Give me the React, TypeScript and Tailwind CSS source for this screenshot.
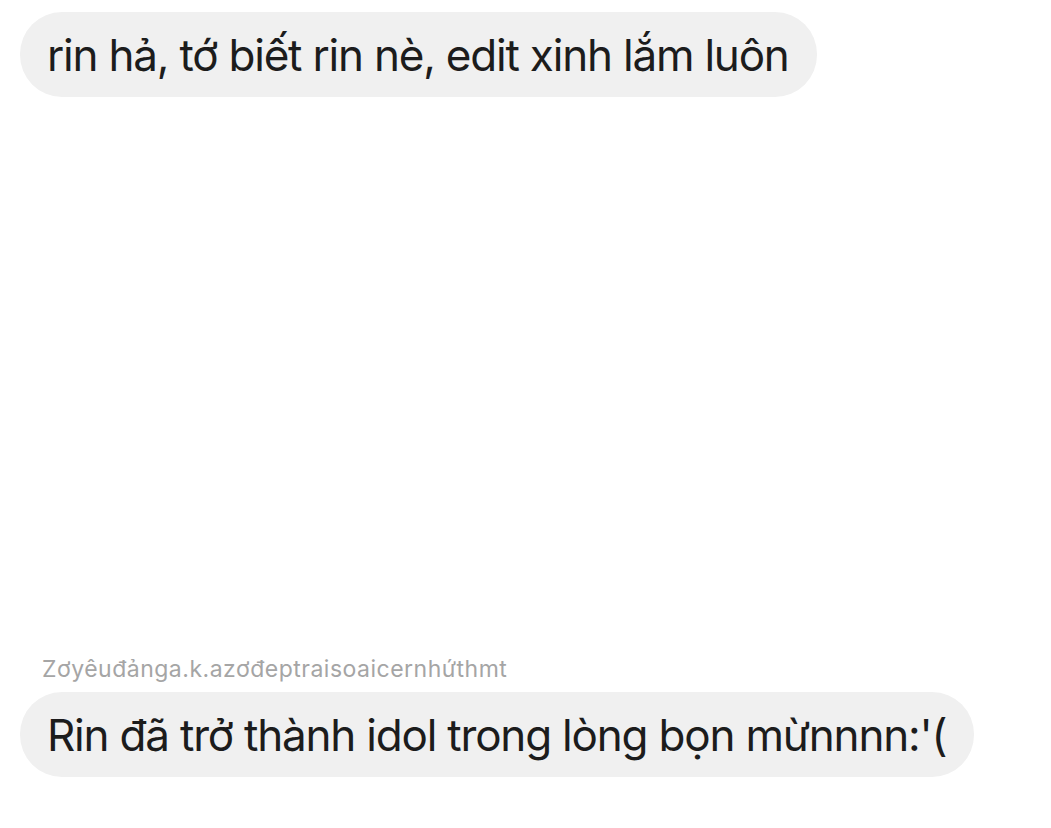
import React from 'react';

const Bubble: React.FC<{ text: string }> = ({ text }) => (
  <div className="inline-flex items-center h-[85px] pl-[27px] pr-[28px] rounded-[42px] bg-[#f0f0f0] text-[#1c1c1c] text-[44px] leading-none tracking-[-1.2px] whitespace-nowrap">
    {text}
  </div>
);

const App: React.FC = () => {
  return (
    <div className="w-[1051px] h-[828px] bg-white overflow-hidden font-[Inter,'Noto_Sans',sans-serif]">
      <div className="px-5 pt-3">
        <Bubble text="rin hả, tớ biết rin nè, edit xinh lắm luôn" />
      </div>

      <div className="px-5 pt-[561px]">
        <div className="pl-[22px] text-[23px] leading-none tracking-[0.5px] text-[#a5a5a5] mb-[11px]">
          Zơyêuđảnga.k.azơđeptraisoaicernhứthmt
        </div>
        <Bubble text="Rin đã trở thành idol trong lòng bọn mừnnnn:'(" />
      </div>
    </div>
  );
};

export default App;
